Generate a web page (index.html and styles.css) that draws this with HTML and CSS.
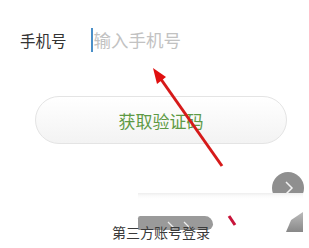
FILE: index.html
```html
<!DOCTYPE html>
<html lang="zh">
<head>
<meta charset="utf-8">
<link rel="stylesheet" href="styles.css">
</head>
<body>
<div class="page">
  <div class="phone-row">
    <span class="label">手机号</span>
    <span class="input"><span class="caret"></span><span class="placeholder">输入手机号</span></span>
  </div>
  <div class="btn">获取验证码</div>
  <div class="third">第三方账号登录</div>

  <div class="circle-btn">
    <svg width="32" height="32" viewBox="0 0 32 32"><path d="M14 10 L20 16 L14 22" fill="none" stroke="#f2f2f2" stroke-width="1.5"/></svg>
  </div>
  <div class="patch">
    <div class="blob">
      <svg width="75" height="16" viewBox="0 0 75 16"><path d="M30 3 L36 9 M46 3 L52 9" fill="none" stroke="#eee" stroke-width="1.3"/></svg>
    </div>
    <div class="wedge"></div>
  </div>
  <svg class="arrow" width="309" height="248" viewBox="0 0 309 248">
    <line x1="158" y1="75" x2="222" y2="166" stroke="#d61a1a" stroke-width="3"/>
    <polygon points="153,68 166,77 157,84" fill="#e01010"/>
    <line x1="229" y1="216" x2="235" y2="225" stroke="#c8143a" stroke-width="3"/>
  </svg>
</div>
</body>
</html>
```
FILE: styles.css
```css
html, body {
  margin: 0;
  padding: 0;
  background: #fff;
}
.page {
  position: relative;
  width: 309px;
  height: 248px;
  overflow: hidden;
  font-family: "Noto Sans CJK SC", "Noto Sans", sans-serif;
}
.phone-row {
  display: flex;
  align-items: center;
  padding: 28px 0 0 20px;
  height: 24px;
}
.label {
  font-size: 15.5px;
  color: #333;
  width: 71px;
  line-height: 24px;
}
.input {
  display: flex;
  align-items: center;
}
.caret {
  width: 1.5px;
  height: 24px;
  background: #4a8fc8;
  margin-right: 1px;
}
.placeholder {
  font-size: 17.5px;
  color: #c2c2c2;
  line-height: 24px;
}
.btn {
  margin: 44px 0 0 35px;
  width: 250px;
  height: 46px;
  border: 1px solid #e4e4e4;
  border-radius: 24px;
  background: linear-gradient(#ffffff, #f3f3f3);
  display: flex;
  align-items: center;
  justify-content: center;
  font-size: 17px;
  color: #5e9a44;
  box-sizing: content-box;
}
.third {
  position: relative;
  z-index: 2;
  margin-top: 80px;
  padding-left: 13px;
  text-align: center;
  font-size: 14px;
  color: #3a3a3a;
  line-height: 16px;
}
.circle-btn {
  position: absolute;
  left: 272px;
  top: 172px;
  width: 32px;
  height: 32px;
  border-radius: 50%;
  background: #8f8f8f;
}
.patch {
  position: absolute;
  left: 138px;
  top: 193px;
  width: 165px;
  height: 41px;
  background: linear-gradient(#eeeeee 0, #fbfbfb 3px, #fff 6px);
}
.blob {
  position: absolute;
  left: 0;
  top: 23px;
  width: 75px;
  height: 14px;
  background: #9a9a9a;
  border-radius: 4px 14px 10px 2px;
}
.wedge {
  position: absolute;
  right: 0;
  top: 19px;
  width: 17px;
  height: 20px;
  background: linear-gradient(#bbb, #888);
  clip-path: polygon(100% 0, 100% 100%, 0 100%, 30% 40%);
}
.arrow {
  position: absolute;
  left: 0;
  top: 0;
  pointer-events: none;
}
```
